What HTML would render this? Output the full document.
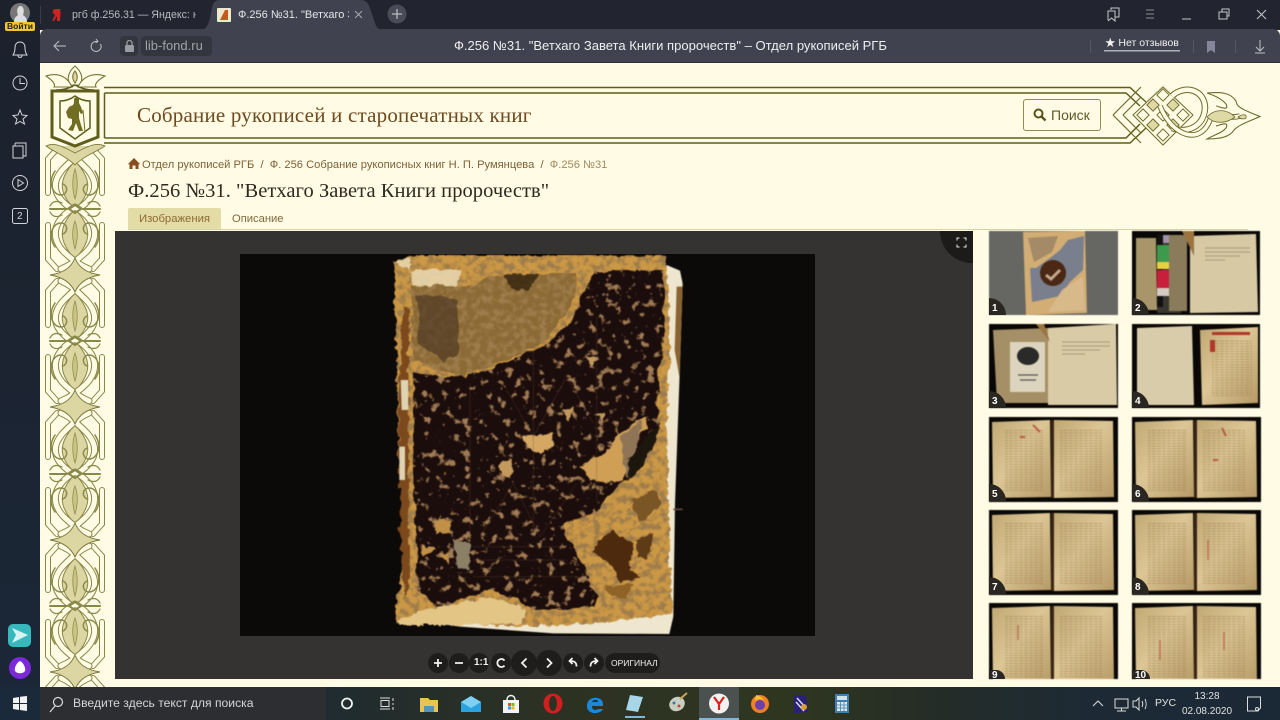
<!DOCTYPE html>
<html lang="ru"><head><meta charset="utf-8"><title>Ф.256 №31</title>
<style>
html,body{margin:0;padding:0;width:1280px;height:720px;overflow:hidden;background:#fffbe5}
body{position:relative;font-family:"Liberation Sans","Noto Sans CJK SC",sans-serif}
.a{position:absolute;white-space:nowrap}
svg{position:absolute;overflow:visible}
.serif{font-family:"Liberation Serif","Noto Serif CJK SC",serif}
.n{position:absolute;width:17px;height:17px;border-radius:0 17px 0 0;background:#2a2722;color:#fff;font:bold 10px/12px "Liberation Sans",sans-serif;padding:5px 0 0 3px;box-sizing:border-box}
</style></head><body>

<!-- chrome -->
<div class="a" style="left:0;top:0;width:1280px;height:30px;background:#22252f"></div>
<div class="a" style="left:0;top:0;width:40px;height:687px;background:linear-gradient(#1c212c,#1b2737)"></div>
<div class="a" style="left:40px;top:29px;width:1240px;height:34px;background:#40424f;border-radius:7px 7px 0 0;border-bottom:1px solid #2d2e37;box-sizing:border-box"></div>
<svg style="left:0;top:0" width="1280" height="64" viewBox="0 0 1280 64">
 <path d="M198 30C206 30 208 26 210 18L212 8C213 3 215 0 220 0H360C366 0 368 3 370 8L374 20C376 27 378 30 384 30Z" fill="#40424f"/>
 <circle cx="20" cy="13" r="10" fill="#777"/><path d="M14 22C14 17 17 16 18 15C16 10 18 6 20.500 6S25 10 23 15C24 16 27 17 27 22Z" fill="#ddd"/>
 <rect x="5" y="22" width="30" height="9" rx="2" fill="#f0c72c"/>
 <path d="M55 9L60 9C61 13 60 20 60 21L57 21L57 16L54 21L52 21L55 15C52 13 52 10 55 9Z" fill="#c8261f"/>
 <rect x="217" y="8" width="14" height="14" rx="1" fill="#f1e7cf"/><path d="M220 20L225 10H228V20Z" fill="#c5581b"/>
 <path d="M355 11L362 18M362 11L355 18" stroke="#aaa" stroke-width="1"/>
 <circle cx="397" cy="14" r="9.500" fill="#494b58"/><path d="M392 14H402M397 9V19" stroke="#bbb" stroke-width="1.300"/>
 <line x1="40.500" y1="6" x2="40.500" y2="24" stroke="#3a3d48"/>
 <g fill="none" stroke="#c6c7cc" stroke-width="1">
  <path d="M1108 20V11H1115M1111 10V8H1119V17H1115M1108 11H1115V21L1111.500 18L1108 21"/>
  <path d="M1146 10H1154M1146 14H1154M1146 18H1154" stroke="#8c8d95"/>
  <path d="M1182 19H1191"/>
  <path d="M1219 12H1227V19H1219ZM1222 12V9H1229V16H1227"/>
  <path d="M1257 10L1266 19M1266 10L1257 19"/>
  <path d="M66 46H54M59 41L54 46L59 51" stroke="#bfc0c6"/>
  <path d="M100.500 44A5 5 0 1 1 97 41.500M96 39L98 41.500L95.500 43" stroke="#bfc0c6"/>
  <path d="M1090.500 40V53M1193.500 40V53M1235.500 40V53" stroke="#555762"/>
  <path d="M1260 40V51M1256 47L1260 51L1264 47M1255 53H1265" stroke="#bfc0c6"/>
 </g>
 <rect x="120" y="36" width="18" height="20" rx="4" fill="#34363f"/><rect x="141" y="36" width="71" height="20" rx="4" fill="#34363f"/>
 <rect x="125" y="45" width="9" height="7" rx="1" fill="#9b9ca3"/><path d="M127 45V43A2.500 2.500 0 0 1 132 43V45" fill="none" stroke="#9b9ca3" stroke-width="1.300"/>
 <path d="M1207 41H1215V53L1211 50L1207 53Z" fill="#85869a"/>
 <rect x="1104" y="50" width="76" height="1.500" fill="#aeb0b8"/>
</svg>
<div class="a" style="left:72px;top:8px;font-size:10.600px;line-height:14px;color:#b9bac0;width:124px;overflow:hidden">ргб ф.256.31 — Яндекс: н</div>
<div class="a" style="left:238px;top:8px;font-size:11px;line-height:14px;color:#e6e6e8;width:111px;overflow:hidden">Ф.256 №31. "Ветхаго З</div>
<div class="a" style="left:7px;top:22px;font-size:8.500px;line-height:9px;color:#222;font-weight:bold">Войти</div>
<div class="a" style="left:145px;top:38px;font-size:13px;line-height:16px;color:#a2a3aa">lib-fond.ru</div>
<div class="a" style="left:454px;top:38px;font-size:13.050px;line-height:16px;color:#eeeef0">Ф.256 №31. "Ветхаго Завета Книги пророчеств" – Отдел рукописей РГБ</div>
<div class="a" style="left:1105px;top:36px;font-size:10.500px;line-height:14px;color:#f1f1f3">★ Нет отзывов</div>

<!-- sidebar icons -->
<svg style="left:0;top:0" width="40" height="720" viewBox="0 0 40 720">
 <g fill="none" stroke="#d2d4da" stroke-width="1">
  <path d="M13 55C15 52 15 50 15 48C15 44 17 42 20 42S25 44 25 48C25 50 25 52 27 55ZM18 55.500C18 58 22 58 22 55.500"/>
  <circle cx="20" cy="83" r="7"/><path d="M20 78V83.500H25"/>
  <path d="M20 110L22 115L27 115.500L23 119L24.500 124L20 121.500L15.500 124L17 119L13 115.500L18 115Z"/>
  <path d="M15 146V144C15 143 16 143 16 143H26V156H23M13 146H23V158H13Z"/>
  <circle cx="20" cy="183" r="7.500"/><path d="M18 179.500L23.500 183L18 186.500Z"/>
  <rect x="12.500" y="208.500" width="15" height="15" rx="2"/>
 </g>
 <rect x="8" y="624" width="23" height="23" rx="5" fill="#37b8bd"/><path d="M12 628L28 635L12 643L16 635Z" fill="#d8f3f2"/>
 <circle cx="20" cy="668" r="11" fill="#7b29d9"/><path d="M20 661C24 663 26 669 25 671C23 674 17 674 15 671C14 669 16 663 20 661Z" fill="#fff"/>
</svg>
<div class="a" style="left:17px;top:210px;font-size:10px;line-height:13px;color:#d2d4da">2</div>

<!-- ornament column & header -->
<svg style="left:0;top:0" width="1280" height="690" viewBox="0 0 1280 690">
 <defs>
  <g id="tile" fill="none" stroke-linecap="round">
   <path d="M30 0C13 18 13 32 30 50C47 32 47 18 30 0ZM30 84C13 102 13 116 30 132C47 116 47 102 30 84Z" fill="#dcd6a3" stroke="#8a8848" stroke-width="1"/>
   <path d="M3 16V50L12 60M57 16V50L48 60M3 116V82L12 72M57 116V82L48 72" stroke="#8a8848" stroke-width="6"/>
   <path d="M3 16V50L12 60M57 16V50L48 60M3 116V82L12 72M57 116V82L48 72" stroke="#fffbe5" stroke-width="4"/>
   <path d="M30 -2C10 10 4 26 18 42C26 50 34 56 44 60M30 -2C50 10 56 26 42 42C34 50 26 56 16 60M16 72C26 76 34 84 42 92C56 108 50 122 30 134M44 72C34 76 26 84 18 92C4 108 10 122 30 134" stroke="#8a8848" stroke-width="7"/>
   <path d="M30 -2C10 10 4 26 18 42C26 50 34 56 44 60M30 -2C50 10 56 26 42 42C34 50 26 56 16 60M16 72C26 76 34 84 42 92C56 108 50 122 30 134M44 72C34 76 26 84 18 92C4 108 10 122 30 134" stroke="#fffbe5" stroke-width="5"/>
   <path d="M30 49C34 59 42 64 55 66C42 68 34 74 30 83C26 74 18 68 5 66C18 64 26 59 30 49Z" fill="#dcd6a3" stroke="#7c7a3e" stroke-width="1"/>
   <path d="M10 38C2 26 8 14 16 14C22 14 24 22 18 25M50 38C58 26 52 14 44 14C38 14 36 22 42 25M10 94C2 106 8 118 16 118C22 118 24 110 18 107M50 94C58 106 52 118 44 118C38 118 36 110 42 107" stroke="#8a8848" stroke-width="1.500"/>
   <path d="M30 12C27 20 27 30 30 40C33 30 33 20 30 12ZM30 92C27 102 27 112 30 122C33 112 33 102 30 92Z" fill="#c9c384" stroke="#8a8848" stroke-width=".7"/>
   <path d="M5 0H22M38 0H55M24 0L30 -4L36 0L30 4Z" stroke="#8a8848" stroke-width="2"/>
   <path d="M5 3C8 9 13 8 17 6M55 3C52 9 47 8 43 6M5 129C8 123 13 124 17 126M55 129C52 123 47 124 43 126" stroke="#8a8848" stroke-width="1.200"/>
  </g>
  <clipPath id="ocl"><rect x="44" y="146" width="64" height="541"/></clipPath>
  <clipPath id="kc"><path d="M1163 85L1193 115L1163 145L1133 115Z"/></clipPath>
 </defs>
 <g clip-path="url(#ocl)">
  <use href="#tile" x="45" y="77"/><use href="#tile" x="45" y="209"/><use href="#tile" x="45" y="341"/><use href="#tile" x="45" y="474"/><use href="#tile" x="45" y="606"/>
 </g>
 <!-- band -->
 <path d="M104 87.500H1130L1146 102M104 143H1130L1146 128" fill="none" stroke="#5f5c1c" stroke-width="1.400"/>
 <path d="M104.500 93H1126L1140 106M104.500 138H1126L1140 124M104.500 93V138" fill="none" stroke="#5f5c1c" stroke-width="1.500"/>
 <!-- top crown -->
 <g fill="#fffbe5" stroke="#777436" stroke-width="1.100">
  <path d="M75 66C82 72 84 80 79 85H71C66 80 68 72 75 66Z"/>
  <path d="M46 76C55 73 66 74 72 87H54C56 84 52 80 46 76ZM105 76C96 73 84 74 78 87H96C94 84 98 80 105 76Z"/>
  <path d="M75 71C78 75 78 79 75 83C72 79 72 75 75 71Z" fill="#dcd6a3"/>
 </g>
 <!-- shield -->
 <path d="M46 146C54 142 62 146 75 153C88 146 96 142 105 146C96 152 84 156 75 165C66 156 54 152 46 146Z" fill="#dcd6a3" stroke="#777436" stroke-width=".8"/>
 <path d="M52 91H98V137L75 146L52 137Z" fill="#fffbe5" stroke="#5f5c1c" stroke-width="3"/>
 <path d="M56 90C64 90 70 88 75 85C80 88 86 90 94 90" fill="none" stroke="#5f5c1c" stroke-width="1.400"/>
 <path d="M60 101C66 101 71 99 75 96C79 99 84 101 90 101V128L75 139L60 128Z" fill="#fffbe5" stroke="#5f5c1c" stroke-width="1.500"/>
 <path d="M74 99C75 97 78 97 79 99L79 103L81 107L83 113L81 114L79 111L79 118L81 125L83 131L79 131L76 123L73 131L68 130L72 124L72 119L68 118L66 112L69 107L73 105L74 103Z" fill="#716d22"/>
 <path d="M83 110L85 132" stroke="#716d22" stroke-width="1"/>
 <!-- right knot -->
 <g fill="#dfd9a6"><path d="M1153 95L1163 105L1153 115L1143 105Z"/><path d="M1153 115L1163 125L1153 135L1143 125Z"/><path d="M1173 95L1183 105L1173 115L1163 105Z" /><path d="M1173 115L1183 125L1173 135L1163 125Z"/></g>
 <g fill="none">
  <path d="M1113 115L1141 87M1113 115L1141 143M1123 115L1141 97M1123 115L1141 133" stroke="#6e6b2c" stroke-width="1.200"/>
  <g clip-path="url(#kc)" stroke="#6e6b2c" stroke-width="6.500"><path d="M1133 115L1163 85M1143 125L1173 95M1153 135L1183 105M1163 145L1193 115M1133 115L1163 145M1143 105L1173 135M1153 95L1183 125M1163 85L1193 115"/></g>
  <g clip-path="url(#kc)" stroke="#fffbe5" stroke-width="4.500"><path d="M1133 115L1163 85M1143 125L1173 95M1153 135L1183 105M1163 145L1193 115M1133 115L1163 145M1143 105L1173 135M1153 95L1183 125M1163 85L1193 115"/></g>
  <path d="M1163 87L1133 115L1163 145L1193 115Z" stroke="#6e6b2c" stroke-width="1"/>
  <path d="M1172 96C1185 84 1205 90 1205 108C1204 126 1188 134 1172 128" stroke="#6e6b2c" stroke-width="6.500"/>
  <path d="M1172 96C1185 84 1205 90 1205 108C1204 126 1188 134 1172 128" stroke="#fffbe5" stroke-width="4.500"/>
  <path d="M1160 106C1172 136 1200 146 1210 120C1214 110 1228 120 1240 116" stroke="#6e6b2c" stroke-width="5.500"/>
  <path d="M1160 106C1172 136 1200 146 1210 120C1214 110 1228 120 1240 116" stroke="#fffbe5" stroke-width="3.600"/>
 </g>
 <path d="M1207 117C1214 109 1226 108 1235 117C1226 124 1214 124 1207 117ZM1238 117C1242 114 1247 114 1246 117C1247 119 1242 120 1238 117Z" fill="#dfd9a6" stroke="#6e6b2c" stroke-width=".8"/>
 <path d="M1207 93C1220 92 1230 92 1236 101C1237 106 1238 108 1260 116.500C1248 122 1240 124 1234 130C1230 137 1220 139 1207 139C1216 134 1222 133 1226 128C1230 120 1218 126 1216 126M1207 93C1216 96 1222 99 1226 104C1230 112 1218 106 1216 106" fill="none" stroke="#6e6b2c" stroke-width="1.100"/>
</svg>

<!-- page text -->
<div class="a serif" style="left:137px;top:102px;font-size:21px;line-height:26px;color:#6d4a20;letter-spacing:.2px">Собрание рукописей и старопечатных книг</div>
<div class="a" style="left:1023px;top:99px;width:78px;height:32px;border:1px solid #8f8d55;border-radius:3px;box-sizing:border-box;font-size:14px;line-height:30px;color:#5e5a2b;padding-left:27px">Поиск</div>
<svg style="left:1033px;top:108px" width="14" height="14" viewBox="0 0 14 14"><circle cx="5.500" cy="5.500" r="4" fill="none" stroke="#57531c" stroke-width="2"/><path d="M8.500 8.500L12.500 12.500" stroke="#57531c" stroke-width="2.400"/></svg>
<svg style="left:128px;top:158px" width="12" height="11" viewBox="0 0 12 11"><path d="M0 6L6 0L12 6L10.500 6.500V11H7.500V7.500H4.500V11H1.500V6.500Z" fill="#8a4d1e"/></svg>
<div class="a" style="left:142px;top:158px;font-size:11.150px;line-height:14px;color:#7e6238">Отдел рукописей РГБ &nbsp;/&nbsp; Ф. 256 Собрание рукописных книг Н. П. Румянцева &nbsp;/&nbsp; <span style="color:#a08a62">Ф.256 №31</span></div>
<div class="a serif" style="left:128px;top:179px;font-size:20.500px;line-height:25px;color:#2f2a1e;letter-spacing:.05px">Ф.256 №31. "Ветхаго Завета Книги пророчеств"</div>
<div class="a" style="left:128px;top:208px;width:93px;height:21px;background:#e3dca6;border-radius:2px 2px 0 0;font-size:11.300px;line-height:21px;color:#8d6a34;text-align:center;padding-top:1px;box-sizing:border-box">Изображения</div>
<div class="a" style="left:232px;top:209px;font-size:11.200px;line-height:21px;color:#7e6a3c">Описание</div>
<div class="a" style="left:128px;top:229px;width:1120px;height:1px;background:#d8d3a8"></div>

<!-- viewer -->
<div class="a" style="left:115px;top:231px;width:858px;height:448px;background:#343331"></div>
<div class="a" style="left:240px;top:254px;width:575px;height:382px;background:#0b0a09"></div>
<div class="a" style="left:940px;top:231px;width:33px;height:32px;background:#1c1b1a;border-radius:0 0 0 32px"></div>
<svg style="left:956px;top:237px" width="11" height="11" viewBox="0 0 11 11"><path d="M1 3.500V1H3.500M7.500 1H10V3.500M10 7.500V10H7.500M3.500 10H1V7.500" fill="none" stroke="#e8e8e8" stroke-width="1"/></svg>

<!-- book -->
<svg style="left:380px;top:250px;filter:blur(.6px)" width="310" height="390" viewBox="0 0 930 1170">
 <defs>
  <filter id="rough" x="-5%" y="-5%" width="110%" height="110%"><feTurbulence type="fractalNoise" baseFrequency=".02" numOctaves="4" seed="7"/><feDisplacementMap in="SourceGraphic" scale="30" xChannelSelector="R" yChannelSelector="G"/></filter>
  <filter id="rough2" x="-5%" y="-5%" width="110%" height="110%"><feTurbulence type="fractalNoise" baseFrequency=".04" numOctaves="3" seed="3"/><feDisplacementMap in="SourceGraphic" scale="22" xChannelSelector="G" yChannelSelector="R"/></filter>
  <filter id="grain" x="0" y="0" width="100%" height="100%">
   <feTurbulence type="fractalNoise" baseFrequency=".05" numOctaves="5" seed="11" result="n"/>
   <feColorMatrix in="n" type="matrix" values="0 0 0 0 .34  0 0 0 0 .2  0 0 0 0 .07  4 0 0 0 -1.700"/>
   <feComposite in2="SourceGraphic" operator="in" result="t"/>
   <feMerge><feMergeNode in="SourceGraphic"/><feMergeNode in="t"/></feMerge>
  </filter>
  <filter id="grainL" x="0" y="0" width="100%" height="100%">
   <feTurbulence type="fractalNoise" baseFrequency=".04" numOctaves="5" seed="21" result="n"/>
   <feColorMatrix in="n" type="matrix" values="0 0 0 0 .36  0 0 0 0 .2  0 0 0 0 .09  0 8 0 0 -4.900"/>
   <feComposite in2="SourceGraphic" operator="in" result="t"/>
   <feMerge><feMergeNode in="SourceGraphic"/><feMergeNode in="t"/></feMerge>
  </filter>
 </defs>
 <!-- white page edges -->
 <path d="M860 45L900 62L908 100L898 400L885 760L880 1100L868 1152L520 1150L240 1130L100 1110L700 1000Z" fill="#efe6cf"/>
 <path d="M890 110L908 110L898 380L884 300Z" fill="#8a6330"/>
 <!-- tan cover -->
 <g filter="url(#grain)">
  <path d="M40 35L110 15L655 15L860 18L870 330L860 500L868 900L878 1090L650 1120L430 1130L240 1120L50 1118L45 1085L78 900L55 600L50 300Z" fill="#cb9844" filter="url(#rough2)"/>
 </g>
 <path d="M45 35L90 25L95 110L230 110L240 60L90 60Z" fill="#e8d6ae" filter="url(#rough2)" opacity=".9"/>
 <path d="M55 1110L130 1080L330 1040L440 1080L430 1120L240 1125L60 1125Z" fill="#e3c686" filter="url(#rough2)"/>
 <path d="M70 170L85 170L88 1010L75 1050L60 850L55 450Z" fill="#7b4a1e" filter="url(#rough2)"/>
 <path d="M62 390L85 390L85 480L65 480ZM58 590L75 590L75 690L58 690Z" fill="#e0d3b2"/>
 <!-- upper brown -->
 <g filter="url(#grain)">
  <path d="M92 105L240 110L380 70L590 70L590 130L545 210L480 280L400 320L300 360L245 385L100 330Z" fill="#8b6a34" filter="url(#rough)"/>
 </g>
 <path d="M110 130L230 150L240 300L190 340L115 280Z" fill="#4a3620" opacity=".65" filter="url(#rough)"/>
 <path d="M370 75L480 70L440 125L390 110Z" fill="#33240f" opacity=".8" filter="url(#rough2)"/>
 <!-- dark leather -->
 <g filter="url(#grainL)">
  <path d="M640 60L850 60L855 240L830 400L835 530L800 600L745 690L700 720L640 790L545 825L600 930L655 1040L640 1070L470 1080L400 1040L330 1020L170 1070L115 1020L100 700L100 370L190 380L260 385L400 325L490 285L570 210Z" fill="#1d0e07" filter="url(#rough)"/>
 </g>
 <!-- lighter tear patches -->
 <path d="M600 650L680 600L720 550L800 500L800 530L750 590L735 690L670 700L630 690Z" fill="#cf9f55" filter="url(#rough2)"/>
 <path d="M720 560L790 510L745 690L735 650Z" fill="#8f7555" filter="url(#rough2)"/>
 <path d="M745 630L835 520L830 570L770 670L745 695Z" fill="#1d120a" filter="url(#rough2)"/>
 <path d="M430 560L520 550L520 590L480 610L435 590Z" fill="#d4a862" filter="url(#rough2)"/>
 <path d="M550 480L585 470L565 510ZM650 490L675 490L665 520ZM610 320L655 320L640 345ZM360 640L395 625L395 680L365 680Z" fill="#c39a5c" filter="url(#rough2)"/>
 <path d="M160 810L210 810L210 850L170 850ZM120 880L170 900L130 920ZM180 910L210 910L200 940Z" fill="#c09048" filter="url(#rough2)"/>
 <path d="M220 870L270 880L270 960L230 950Z" fill="#8b8066" filter="url(#rough2)"/>
 <!-- lower right stains -->
 <path d="M640 890L700 840L760 880L750 960L780 980L720 1000L690 940L640 910Z" fill="#4e2a10" filter="url(#rough2)"/>
 <path d="M770 870L820 850L800 930L770 920Z" fill="#5c3a18" filter="url(#rough2)"/>
 <path d="M750 750L830 720L840 770L780 820Z" fill="#7a5526" filter="url(#rough2)"/>
 <path d="M670 1010L760 1000L740 1050L690 1040Z" fill="#8f6428" filter="url(#rough2)"/>
 <!-- tooling -->
 <g stroke="#6a4a28" stroke-width="1.500" fill="none" opacity=".55">
  <path d="M270 400V860M460 300V860M650 200V760M300 860L400 700L480 860L590 700M380 420L460 560L560 380L640 520M280 890H560M280 930H560M280 980H600"/>
 </g>
 <path d="M880 778H908" stroke="#5d4b34" stroke-width="5"/>
</svg>

<!-- viewer controls -->
<svg style="left:420px;top:645px" width="250" height="36" viewBox="0 0 250 36">
 <g fill="#1e1d1b"><circle cx="18" cy="18" r="10"/><circle cx="39" cy="18" r="10"/><circle cx="59" cy="18" r="10"/><circle cx="81" cy="18" r="10"/><circle cx="104" cy="18" r="13"/><circle cx="129" cy="18" r="13"/><circle cx="153" cy="18" r="10"/><circle cx="174" cy="18" r="10"/><rect x="185" y="8" width="55" height="20" rx="10"/></g>
 <g fill="none" stroke="#f0f0f0" stroke-width="1.800">
  <path d="M14 18H22M18 14V22M35 18H43"/>
  <path d="M84.500 15.500A4 4 0 1 0 84.500 20.500" /><path d="M106.500 13.500L102 18L106.500 22.500M127 13.500L131.500 18L127 22.500"/>
  <path d="M156.500 21.500C156.500 17 154 16 150 16M152.500 13L149.500 16L152.500 19"/><path d="M170.500 21.500C170.500 17 173 16 177 16M174.500 13L177.500 16L174.500 19"/>
 </g>
</svg>
<div class="a" style="left:474px;top:657px;font-size:10px;line-height:12px;font-weight:bold;color:#eee">1:1</div>
<div class="a" style="left:611px;top:658px;font-size:8.500px;line-height:10px;color:#f0f0f0">ОРИГИНАЛ</div>

<!-- thumbs -->
<svg style="left:0;top:0;filter:blur(.5px)" width="1280" height="679" viewBox="0 0 1280 679">
 <defs>
  <pattern id="tx" width="5" height="2.600" patternUnits="userSpaceOnUse"><rect width="4" height="1" fill="#8c6a40" opacity=".42"/></pattern>
  <linearGradient id="pg" x1="0" x2="1" y1="0" y2="1"><stop offset="0" stop-color="#c0a873"/><stop offset=".45" stop-color="#dcc695"/><stop offset="1" stop-color="#b59a66"/></linearGradient>
  <g id="sp">
   <rect width="129" height="85" fill="#0a0806"/>
   <path d="M3 5L61 3L62 80L4 81Z" fill="url(#pg)"/><path d="M65 3L124 4L125 80L65 81Z" fill="url(#pg)"/>
   <rect x="16" y="12" width="38" height="62" fill="url(#tx)"/><rect x="71" y="12" width="42" height="62" fill="url(#tx)"/>
   <rect x="62" y="3" width="3" height="78" fill="#3a2413"/>
  </g>
  <clipPath id="tc"><rect x="980" y="229" width="290" height="450"/></clipPath>
 </defs>
 <g clip-path="url(#tc)">
  <!-- 1 -->
  <rect x="989" y="231" width="129" height="84" fill="#666662"/>
  <path d="M1023 232L1085 231L1087 313L1026 315Z" fill="#d2ad74"/>
  <path d="M1036 268L1050 258L1060 250L1068 240L1084 236L1083 270L1070 282L1060 296L1032 302L1030 268Z" fill="#7a7f8d"/>
  <path d="M1028 238L1058 236L1052 252L1034 262Z" fill="#a48a66"/>
  <path d="M1062 290L1083 276L1085 310L1048 312Z" fill="#d8b98a"/>
  <circle cx="1053" cy="273" r="13" fill="#4a2814"/><path d="M1046 275L1051 279L1060 270" stroke="#c4a88c" stroke-width="3" fill="none"/>
  <!-- 2 -->
  <rect x="1132" y="231" width="128" height="84" fill="#0a0806"/>
  <path d="M1136 238H1156L1157 310H1136Z" fill="#a8956a"/><rect x="1157" y="235" width="24" height="78" fill="#3a3630"/>
  <rect x="1157" y="235" width="6" height="72" fill="#111"/><rect x="1163" y="235" width="6" height="8" fill="#a090a8"/><rect x="1157" y="245" width="12" height="17" fill="#3d9a4c"/><rect x="1157" y="262" width="12" height="7" fill="#e8d040"/><rect x="1157" y="270" width="12" height="18" fill="#c8203a"/><rect x="1157" y="288" width="12" height="8" fill="#d4cbc0"/>
  <rect x="1169" y="235" width="18" height="76" fill="#8a7c5a"/>
  <path d="M1190 236L1256 234L1258 312L1190 313Z" fill="#d6c9a4"/>
  <path d="M1182 231L1194 231L1194 256Z" fill="#9c7440"/>
  <path d="M1205 248H1250M1205 252H1250M1205 256H1240M1205 260H1225" stroke="#9a8c70" stroke-width=".8"/>
  <!-- 3 -->
  <rect x="989" y="324" width="129" height="84" fill="#0a0806"/>
  <path d="M993 330L1050 328L1050 403H997Z" fill="#a48f66"/>
  <rect x="1010" y="342" width="35" height="50" fill="#dcd4bc"/>
  <ellipse cx="1028" cy="356" rx="11" ry="9" fill="#2a2a2a"/>
  <path d="M1018 375H1038M1020 380H1036" stroke="#555" stroke-width="1.200"/>
  <path d="M1048 328L1116 324L1117 405L1048 405Z" fill="#d8cba6"/>
  <path d="M1036 324L1044 324L1050 342Z" fill="#9c7440"/>
  <path d="M1062 342H1110M1062 346H1110M1062 350H1100M1062 354H1085" stroke="#9a8c70" stroke-width=".8"/>
  <!-- 4 -->
  <rect x="1132" y="324" width="128" height="84" fill="#0a0806"/>
  <path d="M1137 328L1192 326L1194 405H1137Z" fill="#d9ccaa"/>
  <path d="M1200 330L1258 327L1258 403L1202 405Z" fill="url(#pg)"/>
  <rect x="1212" y="332" width="38" height="3" fill="#b03828"/>
  <rect x="1212" y="340" width="40" height="56" fill="url(#tx)"/>
  <rect x="1210" y="340" width="5" height="12" fill="#b03828"/>
  <!-- spreads -->
  <use href="#sp" x="989" y="417"/><use href="#sp" x="1132" y="417"/><use href="#sp" x="989" y="510"/><use href="#sp" x="1132" y="510"/><use href="#sp" x="989" y="603"/><use href="#sp" x="1132" y="603"/>
  <path d="M1033 425L1040 432M1222 428L1226 436M1213 460H1218M1020 437H1025" stroke="#b03828" stroke-width="2" opacity=".7"/>
  <path d="M1208 540V560M1018 625V640M1160 640V660M1224 632V650" stroke="#b04838" stroke-width="1.500" opacity=".6"/>
 </g>
</svg>
<div class="n" style="left:989px;top:298px">1</div><div class="n" style="left:1132px;top:298px">2</div>
<div class="n" style="left:989px;top:391px">3</div><div class="n" style="left:1132px;top:391px">4</div>
<div class="n" style="left:989px;top:484px">5</div><div class="n" style="left:1132px;top:484px">6</div>
<div class="n" style="left:989px;top:577px">7</div><div class="n" style="left:1132px;top:577px">8</div>
<div class="a" style="left:989px;top:670px;width:16px;height:9px;overflow:hidden;background:#2a2722;border-radius:0 10px 0 0;color:#fff;font:bold 10px/12px 'Liberation Sans',sans-serif;padding-left:3px;box-sizing:border-box">9</div>
<div class="a" style="left:1132px;top:670px;width:18px;height:9px;overflow:hidden;background:#2a2722;border-radius:0 10px 0 0;color:#fff;font:bold 10px/12px 'Liberation Sans',sans-serif;padding-left:3px;box-sizing:border-box">10</div>

<!-- taskbar -->
<div class="a" style="left:0;top:687px;width:1280px;height:33px;background:linear-gradient(90deg,#1a2a3a 0,#1f2b30 25%,#2c3123 42%,#2f3620 62%,#252d26 72%,#1d2a35 85%,#1b2836 100%)"></div>
<div class="a" style="left:40px;top:687px;width:286px;height:33px;background:#2d2e31"></div>
<div class="a" style="left:699px;top:687px;width:40px;height:33px;background:#4b514e;border-bottom:2px solid #7fb6d9;box-sizing:border-box"></div>
<div class="a" style="left:73px;top:696px;font-size:12.150px;line-height:15px;color:#d6d6d6">Введите здесь текст для поиска</div>
<svg style="left:0;top:687px" width="1280" height="33" viewBox="0 0 1280 33">
 <g fill="#f2f2f2"><path d="M13 11L19 10V16H13ZM20 9.800L27 9V16H20ZM13 17H19V23L13 22ZM20 17H27V24L20 23Z"/></g>
 <g fill="none" stroke="#dcdcdc" stroke-width="1.200"><circle cx="58" cy="15" r="4.500"/><path d="M55 19L50 25"/></g>
 <circle cx="347" cy="16.500" r="5" fill="none" stroke="#f2f2f2" stroke-width="1.800"/>
 <g fill="none" stroke="#ddd" stroke-width="1"><path d="M380 11H390M380 22H390M381 13.500H389V19.500H381ZM393 11V14M393 16V18M393 20V23"/></g>
 <path d="M420 11H428L430 13H438V25H420Z" fill="#eac452"/><rect x="424" y="19" width="10" height="6" fill="#5a93b8"/>
 <path d="M461 15L471 9L481 15V25H461Z" fill="#2aa3e0"/><path d="M461 15L471 21L481 15L471 9Z" fill="#7fd0f2"/>
 <path d="M503 13H519V26H503Z" fill="#f4f4f4"/><path d="M507 13C507 7 515 7 515 13" fill="none" stroke="#f4f4f4" stroke-width="1.400"/><rect x="508" y="16" width="3" height="3" fill="#e0532b"/><rect x="511.500" y="16" width="3" height="3" fill="#7bb928"/><rect x="508" y="19.500" width="3" height="3" fill="#2aa3e0"/><rect x="511.500" y="19.500" width="3" height="3" fill="#f4b422"/>
 <ellipse cx="553" cy="16.500" rx="9.500" ry="10" fill="#d21e1e"/><ellipse cx="553" cy="16.500" rx="4" ry="7.500" fill="#2c3123"/>
 <path d="M603 17C603 9 588 8 587 18C586 28 600 28 603 22H598C595 24 592 23 592 19H603ZM592 15C593 12 598 12 598 15Z" fill="#1e88d6"/>
 <path d="M630 8L643 10L638 25L626 23Z" fill="#a6d6e8"/><path d="M625 30H645" stroke="#7fb6d9" stroke-width="2"/>
 <ellipse cx="677" cy="17" rx="8" ry="7" fill="#c8cec0" transform="rotate(-30 677 17)"/><path d="M680 12L687 6" stroke="#c9a55a" stroke-width="2"/><circle cx="674" cy="16" r="1.500" fill="#3c78b0"/><circle cx="679" cy="19" r="1.500" fill="#b84c3c"/>
 <circle cx="719" cy="16.500" r="10" fill="#f4f2f0"/><path d="M714 10L719 17V23M724 10L719 17" stroke="#d8241c" stroke-width="2.200" fill="none"/>
 <circle cx="760" cy="17" r="9" fill="#f08020"/><circle cx="760" cy="18" r="5" fill="#6b3fb0"/><path d="M756 8C760 9 763 11 764 14C760 11 757 12 755 14Z" fill="#f5c43a"/>
 <path d="M794 8L806 8L808 25L794 26Z" fill="#2a2078"/><path d="M797 11L806 21M796 15L804 24" stroke="#e4e0f0" stroke-width="1.400"/><circle cx="804" cy="20" r="3" fill="#d9a030"/>
 <rect x="835" y="7" width="14" height="19" fill="#3f7fa8"/><rect x="837" y="9" width="10" height="4" fill="#cfe3ef"/><path d="M837 15H847V24H837Z" fill="#dfe8ee"/><path d="M840.500 15V24M844 15V24M837 18H847M837 21H847" stroke="#3f7fa8" stroke-width=".8"/>
 <g fill="none" stroke="#dcdcdc" stroke-width="1"><path d="M1093 19L1098 14L1103 19M1115 12H1128V21H1115ZM1121.500 21V24M1117 24H1126"/><path d="M1133 14H1136L1139 11V23L1136 20H1133ZM1142 14C1143 16 1143 18 1142 20M1145 12C1146.500 15 1146.500 19 1145 22"/></g>
 <path d="M1247.500 10H1260.500V21L1258 24H1247.500Z" fill="none" stroke="#dcdcdc" stroke-width="1"/>
 <circle cx="1257" cy="22" r="1.500" fill="none" stroke="#dcdcdc"/>
</svg>
<div class="a" style="left:1155px;top:697px;font-size:10.500px;line-height:13px;color:#e2e2e2">РУС</div>
<div class="a" style="left:1180px;top:689px;width:54px;text-align:center;font-size:10px;line-height:15px;color:#e2e2e2">13:28<br>02.08.2020</div>
</body></html>
